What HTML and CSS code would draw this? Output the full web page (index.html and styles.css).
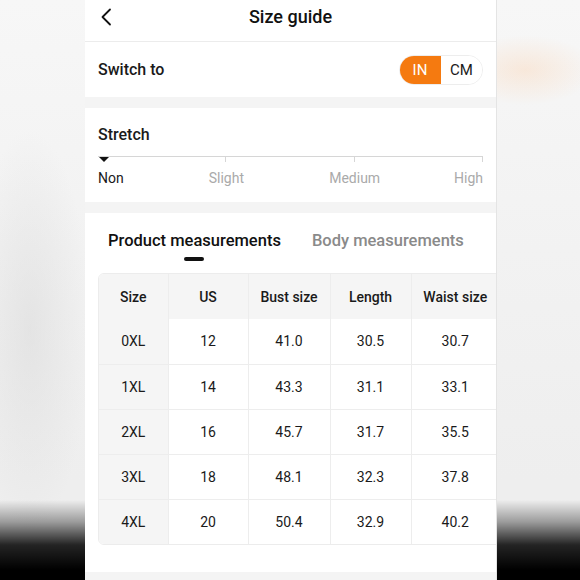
FILE: index.html
```html
<!DOCTYPE html>
<html lang="en">
<head>
<meta charset="utf-8">
<title>Size guide</title>
<link rel="stylesheet" href="styles.css">
</head>
<body>
<div class="backdrop">
  <main class="panel">
    <header class="topbar">
      <span class="back">
        <svg width="12" height="18" viewBox="0 0 12 18"><path d="M10 1.5 L2.5 9 L10 16.5" fill="none" stroke="#111" stroke-width="1.8" stroke-linecap="round" stroke-linejoin="round"/></svg>
      </span>
      <h1 class="title">Size guide</h1>
      <span></span>
    </header>

    <section class="card switch-row">
      <span class="label">Switch to</span>
      <div class="toggle">
        <span class="seg seg-on">IN</span>
        <span class="seg seg-off">CM</span>
      </div>
    </section>

    <section class="card stretch">
      <div class="label stretch-title">Stretch</div>
      <div class="track">
        <span class="step step-first"></span>
        <span class="step"></span>
        <span class="step"></span>
      </div>
      <div class="scale">
        <span class="mark mark-start mark-active">Non</span>
        <span class="mark mark-mid m2">Slight</span>
        <span class="mark mark-mid m3">Medium</span>
        <span class="mark mark-end">High</span>
      </div>
    </section>

    <section class="card measure">
      <div class="tabs">
        <div class="tab tab-active">Product measurements<span class="indicator"></span></div>
        <div class="tab">Body measurements</div>
      </div>
      <div class="table-wrap">
        <table class="sizes">
          <thead>
            <tr><th class="c1">Size</th><th class="c2">US</th><th class="c3">Bust size</th><th class="c4">Length</th><th class="c5">Waist size</th></tr>
          </thead>
          <tbody>
            <tr><th>0XL</th><td>12</td><td>41.0</td><td>30.5</td><td>30.7</td></tr>
            <tr><th>1XL</th><td>14</td><td>43.3</td><td>31.1</td><td>33.1</td></tr>
            <tr><th>2XL</th><td>16</td><td>45.7</td><td>31.7</td><td>35.5</td></tr>
            <tr><th>3XL</th><td>18</td><td>48.1</td><td>32.3</td><td>37.8</td></tr>
            <tr><th>4XL</th><td>20</td><td>50.4</td><td>32.9</td><td>40.2</td></tr>
          </tbody>
        </table>
      </div>
    </section>
  </main>
</div>
</body>
</html>
```
FILE: styles.css
```css
* { box-sizing: border-box; }
html, body {
  margin: 0;
  padding: 0;
  width: 580px;
  height: 580px;
  overflow: hidden;
}
body {
  font-family: Roboto, "Noto Sans", "Liberation Sans", sans-serif;
  color: #1a1a1a;
}
.backdrop {
  width: 580px;
  height: 580px;
  background:
    linear-gradient(to bottom, rgba(0,0,0,0) 0px, rgba(0,0,0,0) 500px, rgba(0,0,0,0.35) 522px, rgba(0,0,0,0.85) 545px, #000 570px),
    radial-gradient(ellipse 70px 35px at 525px 70px, rgba(250,215,185,0.45), rgba(250,215,185,0)),
    radial-gradient(ellipse 60px 200px at 30px 330px, rgba(215,215,215,0.5), rgba(215,215,215,0)),
    linear-gradient(to bottom, #f7f7f7 0px, #f2f2f2 250px, #eeeeee 480px);
  padding-left: 85px;
}
.panel {
  width: 411px;
  height: 580px;
  background: #f4f4f4;
  overflow: hidden;
  box-shadow: 1px 0 0 #e4e4e4;
}
.topbar {
  height: 42px;
  background: #fff;
  border-bottom: 1px solid #ececec;
  display: grid;
  grid-template-columns: 1fr auto 1fr;
  align-items: center;
  padding: 0 15px 7px 15px;
}
.back { display: flex; align-items: center; height: 18px; }
.title {
  margin: 0;
  font-size: 18px;
  font-weight: 500;
  color: #111;
  line-height: 22px;
}
.card {
  background: #fff;
  margin-bottom: 11px;
}
.label {
  font-size: 16px;
  font-weight: 500;
  color: #1a1a1a;
}
.switch-row {
  height: 55px;
  display: flex;
  align-items: center;
  justify-content: space-between;
  padding: 0 13px;
}
.toggle {
  display: flex;
  height: 30px;
  border-radius: 15px;
  overflow: hidden;
  border: 1px solid #ededed;
}
.seg {
  width: 41px;
  display: flex;
  align-items: center;
  justify-content: center;
  font-size: 15px;
}
.seg-on {
  background: #f57a10;
  color: #fff;
  margin: -1px 0 -1px -1px;
  width: 42px;
}
.seg-off { color: #1a1a1a; background: #fff; }

.stretch {
  height: 94px;
  padding: 17px 13px 0;
}
.stretch-title { line-height: 20px; height: 20px; }
.track {
  margin-top: 11px;
  display: grid;
  grid-template-columns: 1fr 1fr 1fr;
  height: 6px;
}
.step {
  border-top: 1px solid #d6d6d6;
  border-right: 1px solid #d6d6d6;
}
.step-first {
  position: relative;
}
.step-first::before {
  content: "";
  position: absolute;
  left: 1px;
  top: 0;
  border-left: 5px solid transparent;
  border-right: 5px solid transparent;
  border-top: 5px solid #111;
}
.scale {
  margin-top: 8px;
  display: grid;
  grid-template-columns: 0 1fr 0 1fr 0 1fr 0;
  font-size: 14px;
  line-height: 16px;
  color: #aaa;
}
.mark { white-space: nowrap; }
.mark-start { grid-column: 1; justify-self: start; }
.m2 { grid-column: 3; justify-self: center; }
.m3 { grid-column: 5; justify-self: center; }
.mark-end { grid-column: 7; justify-self: end; }
.mark-active { color: #1a1a1a; }

.measure {
  height: 359px;
  padding: 18px 0 0 13px;
}
.tabs {
  display: flex;
  gap: 31px;
  padding-left: 10px;
  height: 42px;
}
.tab {
  font-size: 16.5px;
  font-weight: 500;
  color: #8a8a8a;
  line-height: 19px;
  display: flex;
  flex-direction: column;
  align-items: center;
}
.tab-active { color: #111; }
.indicator {
  margin-top: 7px;
  width: 20px;
  height: 4px;
  border-radius: 2px;
  background: #111;
}
.table-wrap {
  width: 420px;
  border: 1px solid #ececec;
  border-radius: 6px;
  overflow: hidden;
}
.sizes {
  border-collapse: collapse;
  table-layout: fixed;
  width: 400px;
  font-size: 14px;
  color: #1a1a1a;
}
.sizes th, .sizes td {
  height: 45px;
  text-align: center;
  padding: 0;
  border-right: 1px solid #ededed;
  border-bottom: 1px solid #ededed;
}
.sizes tr:last-child th, .sizes tr:last-child td { border-bottom: none; }
.sizes tr > :last-child { border-right: none; }
.sizes thead th { background: #f5f5f5; font-weight: 500; }
.sizes tbody th { background: #f5f5f5; font-weight: 400; }
.sizes td { font-weight: 400; }
.c1 { width: 69px; }
.c2 { width: 80px; }
.c3 { width: 82px; }
.c4 { width: 81px; }
.c5 { width: 88px; }
```
